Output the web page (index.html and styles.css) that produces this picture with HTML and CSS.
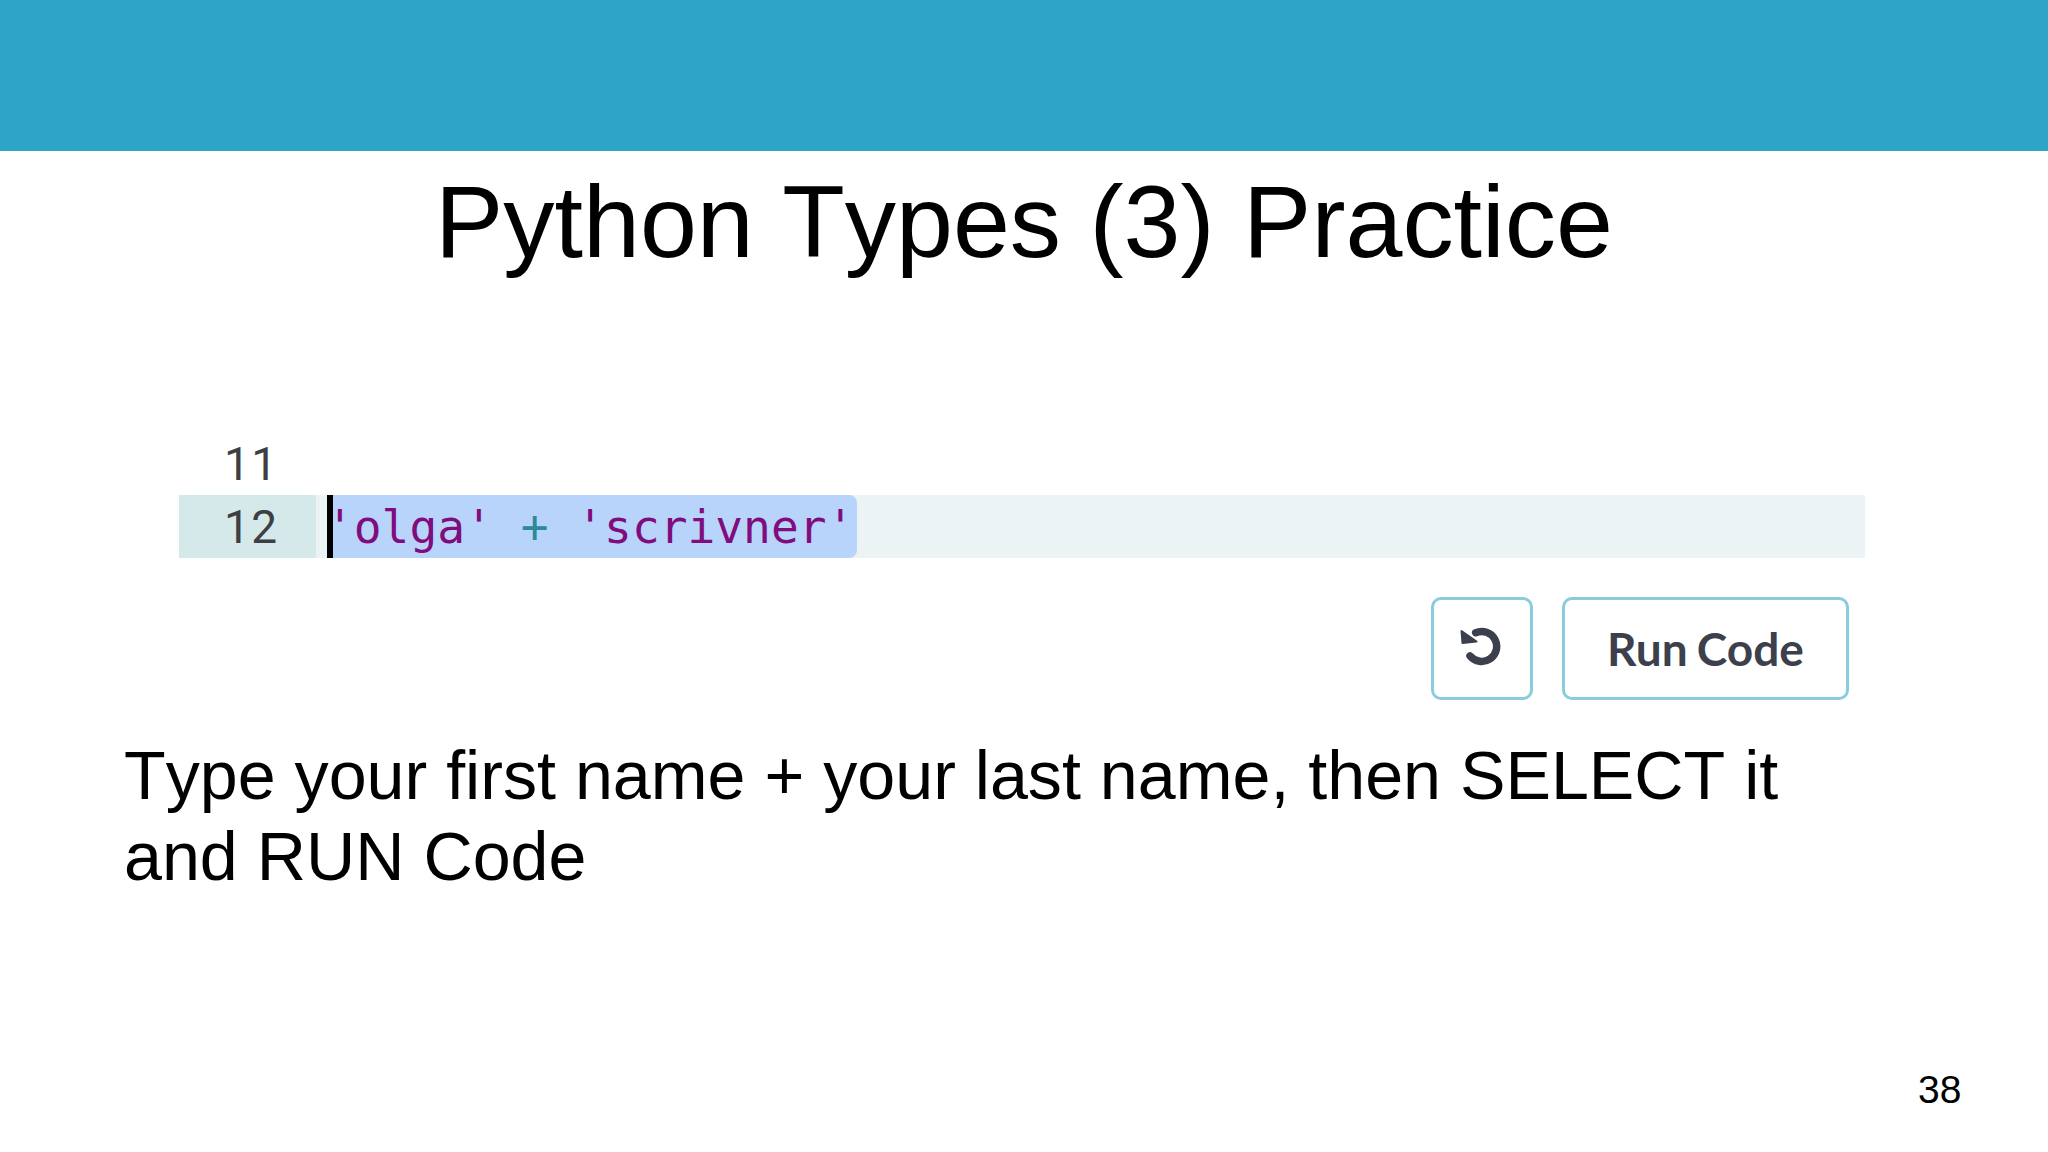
FILE: index.html
```html
<!DOCTYPE html>
<html lang="en">
<head>
<meta charset="utf-8">
<title>Python Types (3) Practice</title>
<link rel="stylesheet" href="styles.css">
</head>
<body>
<div class="slide">
  <div class="banner"></div>
  <h1 class="title">Python Types (3) Practice</h1>
  <div class="editor">
    <div class="line">
      <span class="gutter">11</span>
      <span class="code"></span>
    </div>
    <div class="line active">
      <span class="gutter">12</span>
      <span class="code"><span class="selection"><span class="caret"></span><span class="str">'olga'</span> <span class="op">+</span> <span class="str">'scrivner'</span></span></span>
    </div>
  </div>
  <div class="actions">
    <button class="btn btn-icon" aria-label="Reset">
      <svg class="icon" viewBox="0 0 44 44" width="44" height="44"><path class="icon-ring" d="M15.7 5.7 A15 15 0 1 1 10 28.9"/><path class="icon-head" d="M1.5 4 L2.5 16 L16.5 14.5 Z"/></svg>
    </button>
    <button class="btn btn-run">Run Code</button>
  </div>
  <p class="body-text">Type your first name + your last name, then SELECT it<br>and RUN Code</p>
  <div class="page-num">38</div>
</div>
</body>
</html>
```
FILE: styles.css
```css
* { box-sizing: border-box; }
html, body { margin: 0; padding: 0; background: #fff; }
.slide {
  width: 2048px;
  height: 1152px;
  overflow: hidden;
  display: flex;
  flex-direction: column;
  font-family: "Liberation Sans", Arial, sans-serif;
  font-kerning: none;
  color: #000;
}
.banner { height: 151px; flex: none; background: #2ea4c7; }
.title {
  margin: 11px 0 0;
  height: 120px;
  font-size: 102.4px;
  line-height: 120px;
  font-weight: 400;
  text-align: center;
}
.editor { margin: 150px 183px 0 179px; }
.line { display: flex; height: 63px; }
.gutter {
  width: 137px;
  flex: none;
  padding-left: 45px;
  font-family: Roboto, sans-serif;
  font-size: 46px;
  letter-spacing: 1.5px;
  line-height: 64px;
  color: #3c3f44;
}
.code {
  flex: 1;
  display: flex;
  padding-left: 11px;
  font-family: "DejaVu Sans Mono", monospace;
  font-size: 46.2px;
  line-height: 65px;
}
.active .gutter { background: #d5e8ea; }
.active .code { background: #ebf3f5; }
.selection {
  position: relative;
  height: 63px;
  background: #b9d4fb;
  border-radius: 0 8px 8px 0;
  padding-right: 3px;
  text-indent: -1px;
  white-space: pre;
}
.caret {
  position: absolute;
  left: 0;
  top: 0;
  width: 6px;
  height: 63px;
  background: #000;
}
.str { color: #800d7e; }
.op { color: #2b8a9a; }
.actions {
  display: flex;
  justify-content: flex-end;
  gap: 29px;
  margin: 39px 199px 0 0;
}
.btn {
  height: 103px;
  padding: 0;
  background: #fff;
  border: 3px solid #8accdf;
  border-radius: 10px;
  color: #3c3f4c;
  display: flex;
  align-items: center;
  justify-content: center;
}
.btn-icon { width: 102px; }
.icon-ring { fill: none; stroke: #3c3f4c; stroke-width: 7.5; stroke-linecap: round; }
.icon-head { fill: #3c3f4c; stroke: #3c3f4c; stroke-width: 2; stroke-linejoin: round; }
.btn-run {
  width: 287px;
  font-family: Lato, sans-serif;
  font-weight: 700;
  font-size: 46px;
  font-kerning: normal;
  word-spacing: -2px;
}
.body-text {
  margin: 35px 0 0 124px;
  font-size: 68.2px;
  line-height: 81px;
}
.page-num {
  position: absolute;
  left: 1918px;
  top: 1068px;
  font-size: 39px;
  line-height: 44px;
}
```
